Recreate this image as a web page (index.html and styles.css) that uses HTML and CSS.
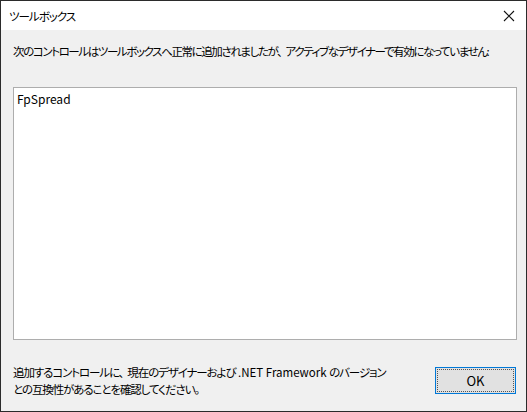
FILE: index.html
```html
<!DOCTYPE html>
<html lang="ja">

<head>
    <meta charset="UTF-8">
    <title>ツールボックス</title>
    <link rel="stylesheet" href="styles.css">
</head>

<body>
    <div class="window">
        <div class="titlebar">
            <span class="title">ツールボックス</span>
            <span class="close">
                <svg width="12" height="12" viewBox="0 0 12 12">
                    <path d="M1 1 L11 11 M11 1 L1 11" stroke="#111" stroke-width="1.1" fill="none" />
                </svg>
            </span>
        </div>
        <div class="content">
            <p class="message">次のコントロールはツールボックスへ正常に追加されましたが、<span class="gap"></span>アクティブなデザイナーで有効になっていません:</p>
            <div class="listbox">
                <div class="item">FpSpread</div>
            </div>
            <div class="footer">
                <p class="note">追加するコントロールに、<span class="gap"></span>現在のデザイナーおよび<span class="latin"> .NET Framework </span>のバージョン<br>との互換性があることを確認してください。</p>
                <button class="ok" type="button"><span class="focus">OK</span></button>
            </div>
        </div>
    </div>
</body>

</html>
```

FILE: styles.css
```css
body {
    margin: 0;
    padding: 0;
    font-family: "Noto Sans CJK JP", "Noto Sans", sans-serif;
    font-size: 12px;
    font-feature-settings: "palt";
    color: #000;
}

.window {
    width: 525px;
    height: 410px;
    border: 1px solid #2b2b2b;
    background: #f0f0f0;
    display: flex;
    flex-direction: column;
    overflow: hidden;
}

.titlebar {
    height: 29px;
    background: #fff;
    display: flex;
    align-items: center;
    justify-content: space-between;
    padding: 0 0 0 8px;
}

.title {
    font-size: 11.5px;
    letter-spacing: -1px;
    color: #000;
}

.close {
    width: 46px;
    height: 29px;
    display: flex;
    align-items: center;
    justify-content: center;
    margin-right: -6px;
}

.content {
    padding: 13px 9px 0 12px;
}

.message {
    margin: 0;
    font-size: 11.5px;
    letter-spacing: -1.4px;
    line-height: 17px;
    white-space: nowrap;
}

.gap {
    display: inline-block;
    width: 4px;
}

.listbox {
    margin-top: 27px;
    width: 502px;
    height: 251px;
    border: 1px solid #adadad;
    background: #fff;
}

.item {
    padding: 2px 0 0 3px;
    line-height: 17px;
}

.footer {
    display: flex;
    justify-content: space-between;
    align-items: flex-start;
    margin-top: 24px;
}

.note {
    margin: 0;
    font-size: 11.5px;
    letter-spacing: -1.1px;
    line-height: 17px;
    white-space: nowrap;
}

.latin {
    letter-spacing: 0;
}

.ok {
    width: 81px;
    height: 27px;
    margin-top: 3px;
    margin-right: 1px;
    padding: 1px;
    border: 1px solid #0078d7;
    background: #e1e1e1;
    font-family: inherit;
    font-size: 13px;
    color: #000;
    flex-shrink: 0;
}

.focus {
    display: flex;
    align-items: center;
    justify-content: center;
    height: 100%;
    border: 1px dotted #555;
    box-sizing: border-box;
}
```
